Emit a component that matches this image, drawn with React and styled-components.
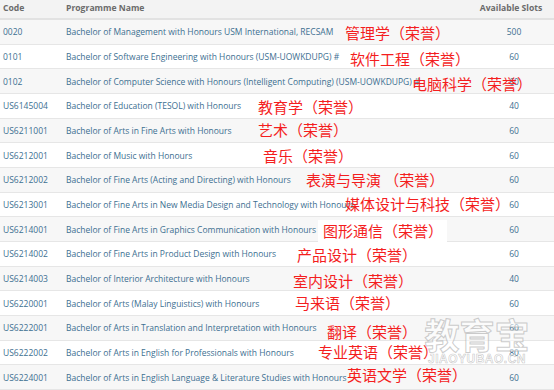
import React from 'react';
import styled, { createGlobalStyle } from 'styled-components';

const GlobalStyle = createGlobalStyle`
    html, body {
        margin: 0;
        padding: 0;
        background: #ffffff;
    }
    body {
        font-family: "Open Sans", "Liberation Sans", sans-serif;
    }
`;

const programmes = [
    { code: '0020', name: 'Bachelor of Management with Honours USM International, RECSAM', slots: '500', note: '管理学（荣誉）', x: 345, dy: 1 },
    { code: '0101', name: 'Bachelor of Software Engineering with Honours (USM-UOWKDUPG) #', slots: '60', note: '软件工程（荣誉）', x: 350, dy: 3 },
    { code: '0102', name: 'Bachelor of Computer Science with Honours (Intelligent Computing) (USM-UOWKDUPG) #', slots: '60', note: '电脑科学（荣誉）', x: 412, dy: 3 },
    { code: 'US6145004', name: 'Bachelor of Education (TESOL) with Honours', slots: '40', note: '教育学（荣誉）', x: 258, dy: 1 },
    { code: 'US6211001', name: 'Bachelor of Arts in Fine Arts with Honours', slots: '60', note: '艺术（荣誉）', x: 258, dy: 0 },
    { code: 'US6212001', name: 'Bachelor of Music with Honours', slots: '60', note: '音乐（荣誉）', x: 263, dy: 1 },
    { code: 'US6212002', name: 'Bachelor of Fine Arts (Acting and Directing) with Honours', slots: '60', note: '表演与导演 （荣誉）', x: 306, dy: 0 },
    { code: 'US6213001', name: 'Bachelor of Fine Arts in New Media Design and Technology with Honours', slots: '60', note: '媒体设计与科技（荣誉）', x: 345, dy: 0 },
    { code: 'US6214001', name: 'Bachelor of Fine Arts in Graphics Communication with Honours', slots: '60', note: '图形通信（荣誉）', x: 323, dy: 2, patch: true },
    { code: 'US6214002', name: 'Bachelor of Fine Arts in Product Design with Honours', slots: '60', note: '产品设计（荣誉）', x: 297, dy: 1 },
    { code: 'US6214003', name: 'Bachelor of Interior Architecture with Honours', slots: '40', note: '室内设计（荣誉）', x: 293, dy: 3 },
    { code: 'US6220001', name: 'Bachelor of Arts (Malay Linguistics) with Honours', slots: '60', note: '马来语（荣誉）', x: 295, dy: 0 },
    { code: 'US6222001', name: 'Bachelor of Arts in Translation and Interpretation with Honours', slots: '60', note: '翻译（荣誉）', x: 327, dy: 4 },
    { code: 'US6222002', name: 'Bachelor of Arts in English for Professionals with Honours', slots: '80', note: '专业英语（荣誉）', x: 318, dy: 0 },
    { code: 'US6224001', name: 'Bachelor of Arts in English Language & Literature Studies with Honours', slots: '60', note: '英语文学（荣誉）', x: 347, dy: -2 },
];

function App() {
    return (
        <>
            <GlobalStyle />
            <TableStyled>
                <HeaderRow>
                    <HeadCell>Code</HeadCell>
                    <HeadCell>Programme Name</HeadCell>
                    <HeadCell $center>Available Slots</HeadCell>
                </HeaderRow>
                {programmes.map((p, i) => (
                    <Row key={p.code} $striped={i % 2 === 0}>
                        <Cell>{p.code}</Cell>
                        <Cell>{p.name}</Cell>
                        <Cell $center>{p.slots}</Cell>
                        <Note $x={p.x} $dy={p.dy} $patch={p.patch}>{p.note}</Note>
                    </Row>
                ))}
                <Watermark>
                    <WatermarkMark>教育宝</WatermarkMark>
                    <WatermarkSite>JIAOYUBAO.CN</WatermarkSite>
                </Watermark>
            </TableStyled>
        </>
    )
}

const TableStyled = styled.div`
    position: relative;
    width: 554px;
    height: 390px;
    display: grid;
    grid-template-rows: 20px repeat(15, 1fr);
    overflow: hidden;
`;

const HeaderRow = styled.div`
    display: grid;
    grid-template-columns: 63px 1fr 84px;
    align-items: center;
    padding-left: 3px;
    background: #f3f3f3;
    border-bottom: 2px solid #e2e2e2;
    box-sizing: border-box;
`;

const HeadCell = styled.div`
    font-size: 8.6px;
    font-weight: 700;
    color: #6b6b6b;
    white-space: nowrap;
    text-align: ${props => props.$center ? 'center' : 'left'};
    padding-right: ${props => props.$center ? '2px' : '0'};
    padding-bottom: 2px;
`;

const Row = styled.div`
    position: relative;
    display: grid;
    grid-template-columns: 63px 1fr 84px;
    align-items: center;
    padding-left: 3px;
    background: ${props => props.$striped ? '#f7f7f7' : '#ffffff'};
    border-bottom: 1px solid #e6e6e6;
    box-sizing: border-box;
`;

const Cell = styled.div`
    font-size: 8.5px;
    color: #3d6f91;
    white-space: nowrap;
    text-align: ${props => props.$center ? 'center' : 'left'};
    padding-left: ${props => props.$center ? '4px' : '0'};
`;

const Note = styled.span`
    position: absolute;
    left: ${props => props.$x}px;
    top: 50%;
    transform: translateY(calc(-50% + ${props => props.$dy}px));
    font-family: "Noto Sans CJK SC", sans-serif;
    font-size: 15px;
    line-height: 18px;
    color: #f41e1e;
    white-space: pre;
    background: ${props => props.$patch ? '#ffffff' : 'transparent'};
    padding: ${props => props.$patch ? '2px 4px 2px 5px' : '0'};
    margin-left: ${props => props.$patch ? '-5px' : '0'};
`;

const Watermark = styled.div`
    position: absolute;
    left: 423px;
    top: 316px;
    width: 108px;
    display: flex;
    flex-direction: column;
    align-items: center;
    pointer-events: none;
`;

const WatermarkMark = styled.div`
    font-family: "Noto Sans CJK SC", sans-serif;
    font-size: 35px;
    font-weight: 700;
    line-height: 36px;
    color: rgba(255, 255, 255, 0.55);
    -webkit-text-stroke: 1px rgba(170, 170, 170, 0.6);
`;

const WatermarkSite = styled.div`
    margin-top: 1px;
    font-family: "Liberation Sans", sans-serif;
    font-size: 12px;
    font-weight: 700;
    letter-spacing: 0.5px;
    line-height: 13px;
    color: rgba(255, 255, 255, 0.55);
    -webkit-text-stroke: 0.6px rgba(170, 170, 170, 0.65);
`;

export default App
